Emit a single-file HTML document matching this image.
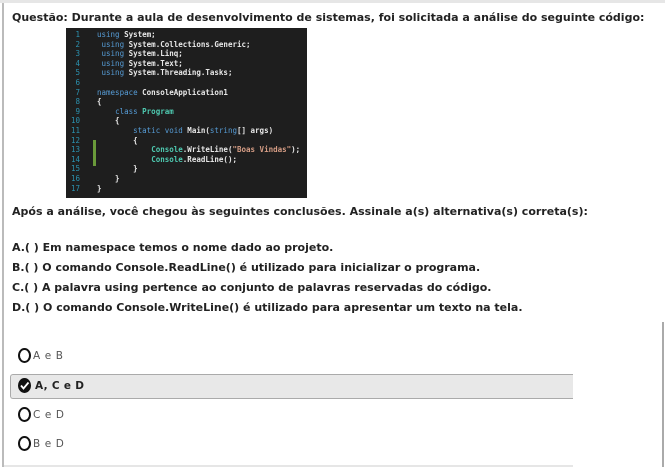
<!DOCTYPE html><html><head><style>
body{margin:0;width:665px;height:467px;background:#fff;position:relative;overflow:hidden;font-family:"DejaVu Sans",sans-serif;color:#222}
.b{position:absolute;font-weight:bold;font-size:11px;white-space:nowrap;left:12px}
#code{position:absolute;left:66px;top:28px;width:241px;height:170px;background:#1e1e1e;font-family:"DejaVu Sans Mono",monospace;font-size:7.5px;line-height:9.6px;color:#e8e8e8;font-weight:bold}
#code div{white-space:pre;height:9.6px}
.n{color:#2b91af;display:inline-block;width:14px;text-align:right;margin-right:17px;font-weight:normal}
.k{color:#569cd6;font-weight:normal}.t{color:#4ec9b0}.s{color:#d69d85}
.opt{position:absolute;left:18px;font-size:10.5px;color:#555;display:flex;align-items:center;letter-spacing:0.6px}
.c{width:13px;height:15px;border:2px solid #111;border-radius:50%;box-sizing:border-box;margin-right:2px}
</style></head><body>
<div style="position:absolute;left:2px;top:0;width:2px;height:467px;background:#bbb"></div>
<div style="position:absolute;left:0;top:0;width:665px;height:3px;background:#e6e6e6"></div>
<div style="position:absolute;left:662px;top:322px;width:2px;height:145px;background:#aaa"></div>
<div style="position:absolute;left:4px;top:465px;width:569px;height:2px;background:#e6e6e6"></div>
<div class="b" style="top:11px">Questão: Durante a aula de desenvolvimento de sistemas, foi solicitada a análise do seguinte código:</div>
<div id="code" style="padding-top:2px;box-sizing:border-box">
<div><span class="n">1</span><span class="k">using</span> System;</div>
<div><span class="n">2</span> <span class="k">using</span> System.Collections.Generic;</div>
<div><span class="n">3</span> <span class="k">using</span> System.Linq;</div>
<div><span class="n">4</span> <span class="k">using</span> System.Text;</div>
<div><span class="n">5</span> <span class="k">using</span> System.Threading.Tasks;</div>
<div><span class="n">6</span></div>
<div><span class="n">7</span><span class="k">namespace</span> ConsoleApplication1</div>
<div><span class="n">8</span>{</div>
<div><span class="n">9</span>    <span class="k">class</span> <span class="t">Program</span></div>
<div><span class="n">10</span>    {</div>
<div><span class="n">11</span>        <span class="k">static void</span> Main(<span class="k">string</span>[] args)</div>
<div><span class="n">12</span>        {</div>
<div><span class="n">13</span>            <span class="t">Console</span>.WriteLine(<span class="s">"Boas Vindas"</span>);</div>
<div><span class="n">14</span>            <span class="t">Console</span>.ReadLine();</div>
<div><span class="n">15</span>        }</div>
<div><span class="n">16</span>    }</div>
<div><span class="n">17</span>}</div>
</div>
<div style="position:absolute;left:93px;top:140px;width:3px;height:26px;background:#6a9a3a"></div>
<div class="b" style="top:205px">Após a análise, você chegou às seguintes conclusões. Assinale a(s) alternativa(s) correta(s):</div>
<div class="b" style="top:241px">A.( ) Em namespace temos o nome dado ao projeto.</div>
<div class="b" style="top:261px">B.( ) O comando Console.ReadLine() é utilizado para inicializar o programa.</div>
<div class="b" style="top:281px">C.( ) A palavra using pertence ao conjunto de palavras reservadas do código.</div>
<div class="b" style="top:301px">D.( ) O comando Console.WriteLine() é utilizado para apresentar um texto na tela.</div>
<div class="opt" style="top:348px"><div class="c"></div>A e B</div>
<div style="position:absolute;left:10px;top:374px;width:563px;height:25px;background:#e8e8e8;border:1px solid #aaa;border-right:none;border-radius:3px 0 0 3px;box-sizing:border-box"></div>
<div class="opt" style="top:378px;color:#222;font-weight:bold;letter-spacing:0.3px"><svg width="15" height="15" style="margin-right:2px"><ellipse cx="6.5" cy="7.5" rx="6.5" ry="7.5" fill="#111"/><path d="M3 7.5l2.5 3 5-6" stroke="#fff" stroke-width="1.8" fill="none"/></svg>A, C e D</div>
<div class="opt" style="top:407px"><div class="c"></div>C e D</div>
<div class="opt" style="top:436px"><div class="c"></div>B e D</div>
</body></html>
